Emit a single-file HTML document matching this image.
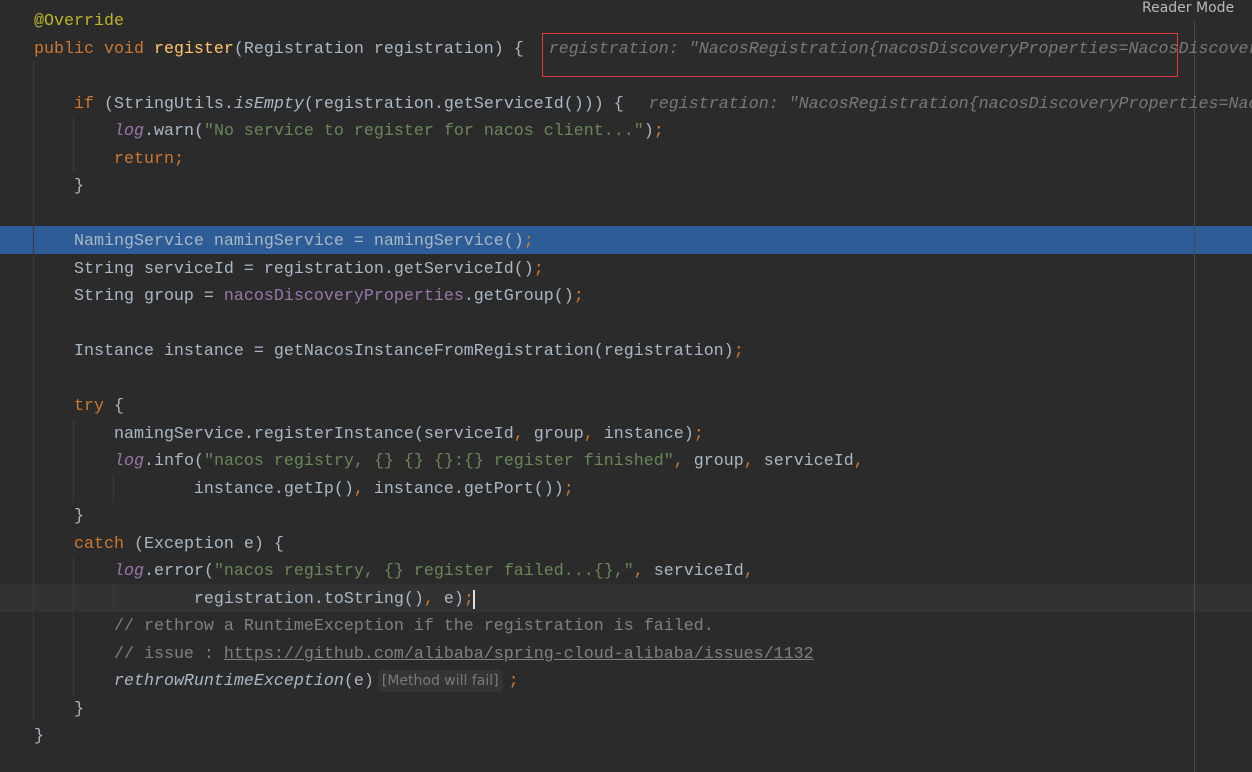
<!DOCTYPE html>
<html><head><meta charset="utf-8"><style>
body{margin:0;width:1252px;height:772px;background:#2b2b2b;overflow:hidden;position:relative;font-family:"Liberation Mono","DejaVu Sans Mono",monospace;font-size:16.67px;color:#a9b7c6}
#w{position:absolute;left:0;top:0;width:1252px;height:772px;overflow:hidden}
.l{position:absolute;left:34px;height:27.5px;line-height:27.5px;white-space:pre;margin-top:2px}
.k{color:#cc7832}.s{color:#6a8759}.a{color:#bbb529}.m{color:#ffc66d}.f{color:#9876aa;font-style:italic}.p{color:#9876aa}.c{color:#808080}.i{font-style:italic}
.h{color:#787878;font-style:italic;margin-left:5px}
.g{position:absolute;width:1px;background:#3b3b3b}
</style></head><body><div id="w">
<div style="position:absolute;left:0;top:226px;width:1252px;height:28px;background:#2d5c96"></div>
<div style="position:absolute;left:0;top:584px;width:1252px;height:28px;background:#323232"></div>
<div style="position:absolute;left:1194px;top:22px;width:1px;height:750px;background:#4a4a4a"></div>
<div class="g" style="left:33px;top:62px;height:660px"></div>
<div class="g" style="left:73px;top:117px;height:55px"></div>
<div class="g" style="left:73px;top:420px;height:82px"></div>
<div class="g" style="left:73px;top:557px;height:140px"></div>
<div class="g" style="left:113px;top:475px;height:27px"></div>
<div class="g" style="left:113px;top:585px;height:27px"></div>
<div style="position:absolute;left:1142px;top:0;font-family:'DejaVu Sans','Liberation Sans',sans-serif;font-size:14px;color:#b8b8b8;line-height:17px">Reader Mode</div>
<div style="position:absolute;left:542px;top:33px;width:634px;height:42px;border:1px solid #e03a3a"></div>

<div class="l" style="top:6px"><span class="a">@Override</span></div>
<div class="l" style="top:34px"><span class="k">public void </span><span class="m">register</span>(Registration registration) {  <span class="h">registration: "NacosRegistration{nacosDiscoveryProperties=NacosDiscoveryProperties</span></div>
<div class="l" style="top:89px">    <span class="k">if </span>(StringUtils.<span class="i">isEmpty</span>(registration.getServiceId())) {  <span class="h">registration: "NacosRegistration{nacosDiscoveryProperties=NacosDisc</span></div>
<div class="l" style="top:116px">        <span class="f">log</span>.warn(<span class="s">"No service to register for nacos client..."</span>)<span class="k">;</span></div>
<div class="l" style="top:144px">        <span class="k">return;</span></div>
<div class="l" style="top:171px">    }</div>
<div class="l" style="top:226px">    NamingService namingService = namingService()<span class="k">;</span></div>
<div class="l" style="top:254px">    String serviceId = registration.getServiceId()<span class="k">;</span></div>
<div class="l" style="top:281px">    String group = <span class="p">nacosDiscoveryProperties</span>.getGroup()<span class="k">;</span></div>
<div class="l" style="top:336px">    Instance instance = getNacosInstanceFromRegistration(registration)<span class="k">;</span></div>
<div class="l" style="top:391px">    <span class="k">try </span>{</div>
<div class="l" style="top:419px">        namingService.registerInstance(serviceId<span class="k">, </span>group<span class="k">, </span>instance)<span class="k">;</span></div>
<div class="l" style="top:446px">        <span class="f">log</span>.info(<span class="s">"nacos registry, {} {} {}:{} register finished"</span><span class="k">, </span>group<span class="k">, </span>serviceId<span class="k">,</span></div>
<div class="l" style="top:474px">                instance.getIp()<span class="k">, </span>instance.getPort())<span class="k">;</span></div>
<div class="l" style="top:501px">    }</div>
<div class="l" style="top:529px">    <span class="k">catch </span>(Exception e) {</div>
<div class="l" style="top:556px">        <span class="f">log</span>.error(<span class="s">"nacos registry, {} register failed...{},"</span><span class="k">, </span>serviceId<span class="k">,</span></div>
<div class="l" style="top:584px">                registration.toString()<span class="k">, </span>e)<span class="k">;</span><span style="border-left:2px solid #ddd;margin-left:-1px"></span></div>
<div class="l" style="top:611px">        <span class="c">// rethrow a RuntimeException if the registration is failed.</span></div>
<div class="l" style="top:639px">        <span class="c">// issue : <u>https://github.com/alibaba/spring-cloud-alibaba/issues/1132</u></span></div>
<div class="l" style="top:666px">        <span class="i">rethrowRuntimeException</span>(e)<span style="display:inline-block;margin:0 6px 0 4px;padding:0 4px;background:#343434;border-radius:4px;color:#7a7a7a;font-family:'DejaVu Sans','Liberation Sans',sans-serif;font-size:14px;line-height:22px">[Method will fail]</span><span class="k">;</span></div>
<div class="l" style="top:694px">    }</div>
<div class="l" style="top:721px">}</div>
</div></body></html>
